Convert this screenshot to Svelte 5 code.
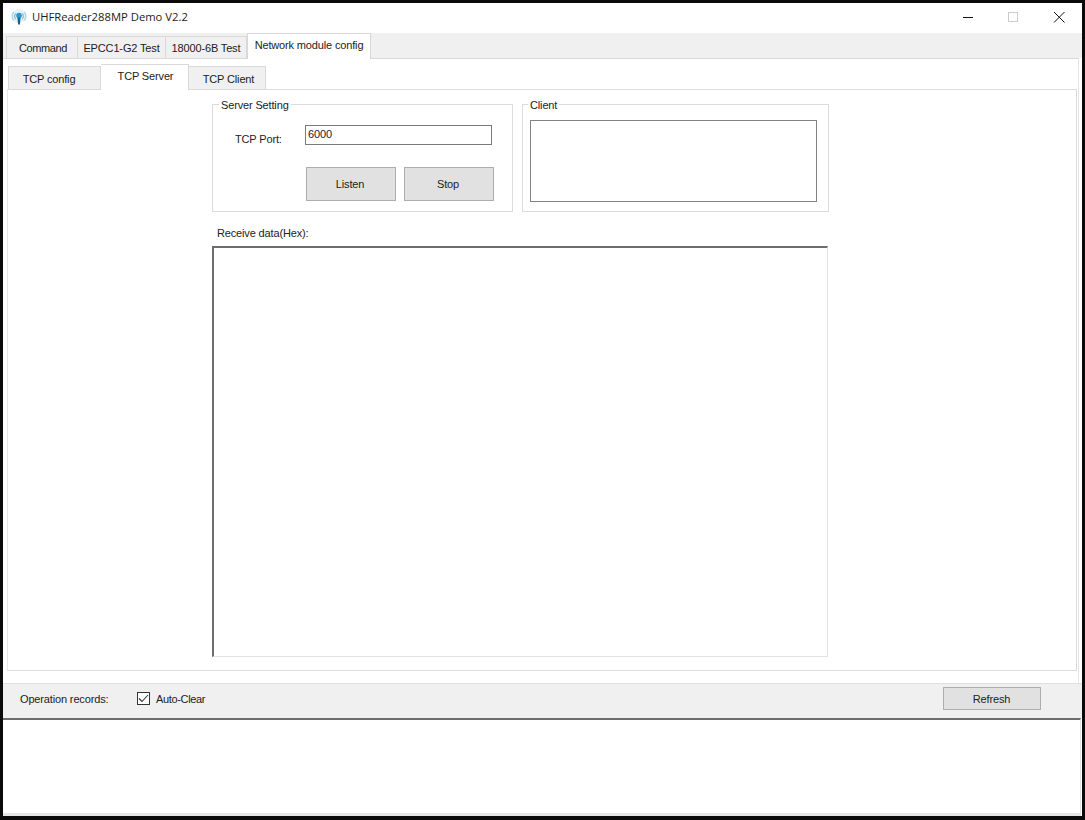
<script lang="ts">
  const mainTabs = ['Command', 'EPCC1-G2 Test', '18000-6B Test', 'Network module config'];
  const subTabs = ['TCP config', 'TCP Server', 'TCP Client'];
  let mainActive = $state(3);
  let subActive = $state(1);
  let port = $state('6000');
  let autoClear = $state(true);
</script>

<div class="frame">
  <div class="window">
    <header class="titlebar">
      <svg class="app-icon" width="16" height="16" viewBox="0 0 16 16" fill="none">
        <circle cx="8" cy="7" r="7" fill="#e4f1f6" />
        <path d="M2.800 11.500a6.500 6.500 0 0 1 0-8.500" stroke="#b4d8e6" stroke-width="1.600" />
        <path d="M13.200 3a6.500 6.500 0 0 1 0 8.500" stroke="#b4d8e6" stroke-width="1.600" />
        <path d="M4.900 10a4 4 0 0 1 0-5.500" stroke="#8cc6dc" stroke-width="1.400" />
        <path d="M11.100 4.500a4 4 0 0 1 0 5.500" stroke="#8cc6dc" stroke-width="1.400" />
        <circle cx="8" cy="6.500" r="2.800" fill="#2a9bc9" />
        <path d="M6.400 8.500h3.200L8.900 15.500H7.100z" fill="#14648f" />
      </svg>
      <span class="title">UHFReader288MP Demo V2.2</span>
      <div class="controls">
        <svg width="46" height="30" viewBox="0 0 46 30"><path d="M19 14.500h10" stroke="#111" /></svg>
        <svg width="46" height="30" viewBox="0 0 46 30"><rect x="18.500" y="9.500" width="9" height="9" fill="none" stroke="#ccc" /></svg>
        <svg width="46" height="30" viewBox="0 0 46 30"><path d="M18 9l10.500 10.500M28.500 9L18 19.500" stroke="#111" /></svg>
      </div>
    </header>

    <nav class="main-tabs">
      {#each mainTabs as tab, i}
        <button class="main-tab" class:active={mainActive === i} onclick={() => (mainActive = i)}>{tab}</button>
      {/each}
    </nav>

    <div class="main-body">
      <nav class="sub-tabs">
        {#each subTabs as tab, i}
          <button class="sub-tab" class:active={subActive === i} onclick={() => (subActive = i)}>{tab}</button>
        {/each}
      </nav>

      <section class="panel">
        <div class="groups">
          <fieldset class="group server">
            <legend>Server Setting</legend>
            <div class="port-row">
              <label for="port">TCP Port:</label>
              <input id="port" type="text" bind:value={port} />
            </div>
            <div class="actions">
              <button class="btn listen">Listen</button>
              <button class="btn stop">Stop</button>
            </div>
          </fieldset>
          <fieldset class="group client">
            <legend>Client</legend>
            <div class="client-list"></div>
          </fieldset>
        </div>
        <div class="receive-label">Receive data(Hex):</div>
        <div class="receive-box"></div>
      </section>
    </div>

    <div class="records-bar">
      <span class="records-label">Operation records:</span>
      <label class="check">
        <input type="checkbox" bind:checked={autoClear} />
        <span class="box">
          {#if autoClear}
            <svg width="11" height="11" viewBox="0 0 11 11" fill="none"><path d="M1 5.500l3 3L10 2" stroke="#333" stroke-width="1.100" /></svg>
          {/if}
        </span>
        <span class="check-text">Auto-Clear</span>
      </label>
      <button class="btn refresh">Refresh</button>
    </div>

    <div class="records-log"></div>
  </div>
</div>

<style>
  :global(body) {
    margin: 0;
    background: #000;
  }

  .frame {
    box-sizing: border-box;
    width: 1085px;
    height: 820px;
    padding: 3px 3px 4px 3px;
    background: #0a0a0a;
    font-family: "Liberation Sans", Arial, sans-serif;
    font-size: 11px;
    letter-spacing: -0.15px;
    color: #222;
  }

  .window {
    display: flex;
    flex-direction: column;
    height: 100%;
    background: #fff;
  }

  button {
    font: inherit;
    color: inherit;
    letter-spacing: inherit;
    white-space: nowrap;
  }

  .titlebar {
    display: flex;
    align-items: center;
    flex: none;
    box-sizing: border-box;
    height: 30px;
    padding: 0 0 3px 8px;
    background: #fff;
  }

  .app-icon {
    margin-right: 5px;
  }

  .title {
    font-family: "Open Sans", sans-serif;
    font-size: 11.25px;
    letter-spacing: 0;
    color: #1c1c1c;
  }

  .controls {
    display: flex;
    height: 30px;
    margin: 3px 0 0 auto;
  }

  .controls svg {
    display: block;
  }

  .main-tabs {
    display: flex;
    align-items: flex-start;
    flex: none;
    position: relative;
    z-index: 1;
    height: 25px;
    padding-left: 3px;
    background: #f0f0f0;
  }

  .main-tab {
    box-sizing: border-box;
    height: 23px;
    margin-top: 3px;
    padding: 1px 0 0;
    background: #f0f0f0;
    border: 1px solid #d9d9d9;
    border-left-width: 0;
  }

  .main-tab:nth-child(1) {
    width: 72px;
    padding-left: 2px;
    border-left-width: 1px;
    letter-spacing: -0.4px;
  }

  .main-tab:nth-child(2) {
    width: 88px;
  }

  .main-tab:nth-child(3) {
    width: 81px;
  }

  .main-tab.active {
    width: 124px;
    height: 26px;
    margin-top: 0;
    padding: 0 0 3px;
    background: #fff;
    border-bottom: none;
    border-left-width: 1px;
  }

  .main-body {
    display: flex;
    flex-direction: column;
    flex: none;
    box-sizing: border-box;
    height: 625px;
    margin-right: 3px;
    padding: 5px 0 0 4px;
    background: #fff;
    border-top: 1px solid #d9d9d9;
    border-right: 1px solid #e6e6e6;
  }

  .sub-tabs {
    display: flex;
    align-items: flex-end;
    flex: none;
    position: relative;
    z-index: 1;
    height: 26px;
    padding-left: 1px;
  }

  .sub-tab {
    box-sizing: border-box;
    height: 24px;
    padding: 1px 0 0;
    background: #f0f0f0;
    border: 1px solid #d9d9d9;
  }

  .sub-tab:nth-child(1) {
    width: 93px;
    padding-right: 11px;
  }

  .sub-tab:nth-child(3) {
    width: 77px;
    padding-left: 3px;
    border-left: none;
  }

  .sub-tab.active {
    width: 88px;
    height: 26px;
    padding: 0 0 3px 2px;
    background: #fff;
    border-left: none;
    border-bottom: none;
  }

  .panel {
    box-sizing: border-box;
    width: 1070px;
    height: 582px;
    margin-top: -1px;
    padding: 14px 0 0 204px;
    border: 1px solid #dcdcdc;
    border-left-color: #e6e6e6;
    background: #fff;
  }

  .groups {
    display: flex;
    gap: 9px;
  }

  .group {
    box-sizing: border-box;
    height: 115px;
    min-width: 0;
    margin: -7px 0 0;
    padding: 0;
    border: 1px solid #dcdcdc;
  }

  .group legend {
    margin-left: 6px;
    padding: 2px 2px 0;
    line-height: 13px;
  }

  .server {
    width: 301px;
  }

  .client {
    width: 307px;
  }

  .client legend {
    margin-left: 5px;
  }

  .port-row {
    display: flex;
    align-items: center;
    margin: 12px 0 0 22px;
  }

  .port-row label {
    width: 70px;
    padding-top: 9px;
  }

  .port-row input {
    box-sizing: border-box;
    width: 187px;
    height: 20px;
    padding: 0 2px 2px;
    font: inherit;
    letter-spacing: inherit;
    color: inherit;
    border: 1px solid #7a7a7a;
    border-radius: 0;
    outline: none;
  }

  .actions {
    display: flex;
    gap: 8px;
    margin: 22px 0 0 93px;
  }

  .btn {
    box-sizing: border-box;
    padding: 0;
    background: #e1e1e1;
    border: 1px solid #adadad;
  }

  .listen,
  .stop {
    width: 90px;
    height: 34px;
    padding-right: 2px;
  }

  .client-list {
    box-sizing: border-box;
    width: 287px;
    height: 82px;
    margin: 8px 0 0 7px;
    border: 1px solid #828282;
  }

  .receive-label {
    margin: 14px 0 0 5px;
    line-height: 14px;
  }

  .receive-box {
    box-sizing: border-box;
    width: 616px;
    height: 411px;
    margin-top: 6px;
    border: 1px solid #e3e3e3;
    border-top: 2px solid #6d6d6d;
    border-left: 2px solid #6d6d6d;
  }

  .records-bar {
    display: flex;
    align-items: center;
    flex: none;
    box-sizing: border-box;
    height: 35px;
    padding: 0 41px 5px 17px;
    background: #f0f0f0;
    border-top: 1px solid #e0e0e0;
  }

  .records-label {
    width: 117px;
  }

  .check {
    display: flex;
    align-items: center;
    gap: 6px;
  }

  .check-text {
    letter-spacing: -0.35px;
  }

  .check input {
    position: absolute;
    opacity: 0;
    width: 0;
    height: 0;
  }

  .box {
    display: flex;
    align-items: center;
    justify-content: center;
    box-sizing: border-box;
    width: 13px;
    height: 13px;
    background: #fff;
    border: 1px solid #333;
  }

  .refresh {
    width: 98px;
    height: 23px;
    margin-left: auto;
    padding-right: 1px;
  }

  .records-log {
    flex: 1;
    margin-right: 1px;
    background: #fff;
    border-top: 2px solid #6d6d6d;
    border-bottom: 3px solid #e6e6e6;
    border-right: 1px solid #e3e3e3;
  }
</style>
